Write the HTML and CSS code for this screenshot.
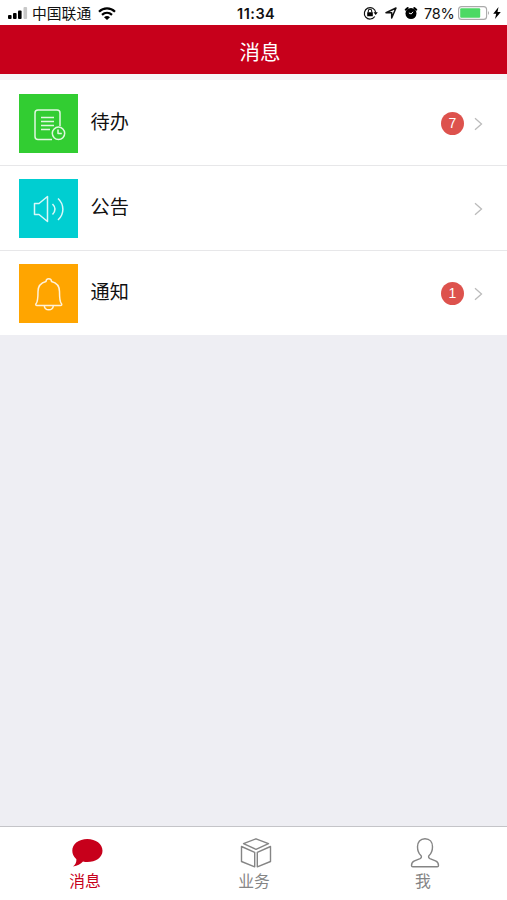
FILE: index.html
```html
<!DOCTYPE html>
<html lang="zh-CN">
<head>
<meta charset="utf-8">
<title>消息</title>
<link rel="stylesheet" href="styles.css">
</head>
<body>
<div class="status">
  <svg class="signal" width="20" height="12" viewBox="0 0 20 12"><rect x="0" y="8" width="3.6" height="4" rx="1"/><rect x="5" y="6" width="3.6" height="6" rx="1"/><rect x="10" y="3.5" width="3.6" height="8.5" rx="1"/><rect x="15.5" y="0" width="3.6" height="12" rx="1" fill="#c8c8c8"/></svg>
  <span class="carrier">中国联通</span>
  <svg class="wifi" width="18" height="13" viewBox="0 0 18 13"><g fill="none" stroke="#000" stroke-width="2.2"><path d="M1 4.7C5.5.3 12.500.3 17 4.700"/><path d="M4 7.900c2.900-2.700 7.100-2.700 10 0"/></g><path d="M6 10.200q3-2.400 6 0L9 13z"/></svg>
  <span class="time">11:34</span>
  <div class="indicators">
    <svg width="15" height="14" viewBox="0 0 15 14"><path d="M11.800 10.500A5.700 5.700 0 1 1 12.700 6.500" fill="none" stroke="#111" stroke-width="1.200"/><path d="M10.500 6.300h4.300l-2.100 2.800zM4.200 6.300h5.600v4H4.200z"/><path d="M5.300 6.500V5a1.700 1.700 0 0 1 3.400 0v1.500" fill="none" stroke="#111" stroke-width="1.100"/></svg>
    <svg class="locate" width="12" height="12" viewBox="0 0 12 12"><path d="M1 5.800 11 1 6.700 11V5.800z" fill="none" stroke="#111" stroke-width="1.500" stroke-linejoin="round"/></svg>
    <svg class="alarm" width="14" height="14" viewBox="0 0 14 14"><circle cx="7" cy="7.500" r="5.500"/><path d="M1.700 3.700 3.700 2M12.300 3.700 10.300 2" stroke="#000" stroke-width="2" stroke-linecap="round"/><path d="M7.200 8 9 5.800M7.200 8 4.900 7" fill="none" stroke="#fff" stroke-width="1"/></svg>
    <span class="percent">78%</span>
    <svg class="battery" width="32" height="14" viewBox="0 0 32 14"><rect x=".6" y=".6" width="28" height="12.800" rx="3" fill="#fff" stroke="#aaa" stroke-width="1.100"/><rect x="2.200" y="2.200" width="20" height="9.600" rx="1" fill="#4cd964"/><path d="M30 5q2 2 0 4z" fill="#aaa"/></svg>
    <svg class="bolt" width="8" height="12" viewBox="0 0 8 12"><path d="M5.500 0 .2 6.800h3L2 12l5.800-7H4.500z"/></svg>
  </div>
</div>
<header class="header">消息</header>
<main class="list">
  <div class="row">
    <div class="tile green"><svg width="59" height="59" viewBox="0 0 59 59"><path d="M41 32V19q0-3-3-3H19q-3 0-3 3v23.500q0 3 3 3h14"/><path d="M22 23.500h13M22 27.500h13M22 31.500h13M22 35.500h9"/><circle cx="39.500" cy="39.300" r="6.200"/><path d="M39 35.500v4h3.800"/></svg></div>
    <span class="label">待办</span><span class="badge">7</span>
    <svg class="chevron" width="9" height="14" viewBox="0 0 9 14"><path d="m1 1.300 6.500 5.700L1 12.700"/></svg>
  </div>
  <div class="row">
    <div class="tile cyan"><svg width="59" height="59" viewBox="0 0 59 59"><path d="M28.500 17.500v25L20 35.500h-4.500v-11H20z"/><path d="M33.500 25q5 5 0 10.500M39 19.500c6.500 6 6.500 15.500 0 21.500"/></svg></div>
    <span class="label">公告</span>
    <svg class="chevron" width="9" height="14" viewBox="0 0 9 14"><path d="m1 1.300 6.500 5.700L1 12.700"/></svg>
  </div>
  <div class="row">
    <div class="tile orange"><svg width="59" height="59" viewBox="0 0 59 59"><path d="M27 17.500c0-3.700 5.500-3.700 5.500 0 5 1.300 8 5 8 10 0 7 .5 10.500 1.800 12 .9 1 .4 2-.8 2h-23.500c-1.200 0-1.700-1-.8-2 1.300-1.500 1.800-5 1.800-12 0-5 3-8.700 8-10zM25.300 42c.5 5 8.500 5 9 0"/></svg></div>
    <span class="label">通知</span><span class="badge">1</span>
    <svg class="chevron" width="9" height="14" viewBox="0 0 9 14"><path d="m1 1.300 6.500 5.700L1 12.700"/></svg>
  </div>
</main>
<nav class="tabs">
  <div class="tab active"><svg width="32" height="30" viewBox="0 0 32 30"><path d="M16.300 1C24.800 1 31.500 6 31.500 12.800S24.800 24 16.300 24q-2.300 0-4.300-.5Q8.500 27.500 2 28.600q3.700-3.300 3.400-7.400Q1.300 17.800 1.300 12.800C1.300 6 7.800 1 16.300 1z"/></svg><span>消息</span></div>
  <div class="tab"><svg class="outline" width="32" height="30" viewBox="0 0 32 30"><path d="M16 .8 28.500 5.700 16 11.300 3.500 5.700zM1.500 8.500l13.200 5.800v14.500L1.500 23.500zM30.500 8.500l-13.200 5.800v14.500l13.200-5.300z"/></svg><span>业务</span></div>
  <div class="tab"><svg class="outline" width="32" height="30" viewBox="0 0 32 30"><path d="M16 .8c4.800 0 7.500 3.400 7.500 8 0 3.700-1.200 6.700-3.400 8.800-1 1-.5 2.400.8 3l5.600 2.300c2.200.9 3 2.600 3 4.700 0 .8-.5 1.200-1.300 1.200H3.800c-.8 0-1.300-.4-1.300-1.200 0-2.100.8-3.800 3-4.700l5.600-2.300c1.300-.6 1.800-2 .8-3-2.200-2.100-3.400-5.100-3.400-8.800 0-4.600 2.700-8 7.500-8z"/></svg><span>我</span></div>
</nav>
</body>
</html>
```
FILE: styles.css
```css
* { box-sizing: border-box; }
body {
  margin: 0;
  height: 900px;
  display: flex;
  flex-direction: column;
  overflow: hidden;
  background: #eeeef3;
  color: #111;
  font-family: "Liberation Sans", "Noto Sans CJK SC", sans-serif;
}
svg { display: block; flex: none; }
.status {
  height: 25px;
  flex: none;
  display: grid;
  grid-template-columns: 24px 66px 139px 54px 1fr;
  align-items: center;
  padding: 2px 6px 0 8px;
  background: #fff;
  line-height: 20px;
}
.signal, .wifi { margin-top: -1px; }
.carrier { font-size: 14.800px; white-space: nowrap; }
.time { font: 600 14.500px/20px Inter, sans-serif; letter-spacing: .5px; }
.indicators { display: flex; align-items: center; justify-content: flex-end; }
.indicators svg { margin-top: -1px; }
.locate { margin-left: 7px; }
.alarm { margin-left: 7px; }
.percent { margin-left: 6px; font: 14.500px/20px Inter, sans-serif; width: 30px; letter-spacing: -.2px; }
.battery { margin-left: 4px; }
.bolt { margin-left: 3px; }
.header {
  height: 49px;
  flex: none;
  background: #c7001b;
  color: #fff;
  font-size: 20.500px;
  font-weight: 400;
  line-height: 55px;
  padding-left: 13px;
  text-align: center;
}
.list { border-top: 6px solid #f6f6f8; }
.row {
  height: 85px;
  display: flex;
  align-items: center;
  padding: 1px 24px 0 19px;
  background: #fff;
  border-bottom: 1px solid #e7e7e9;
}
.row:first-child { height: 86px; padding-top: 2px; }
.row:last-child { height: 84px; border-bottom: 0; }
.tile { width: 59px; height: 59px; flex: none; }
.tile svg { fill: none; stroke: #fff; stroke-width: 1.500; stroke-opacity: .85; stroke-linejoin: round; }
.green { background: #32cd32; }
.cyan { background: #00ced1; }
.orange { background: #ffa500; }
.label { flex: 1; margin: 0 0 0 12.500px; font-size: 19.200px; line-height: 28px; transform: translateY(-1px); }
.badge {
  width: 23px;
  height: 23px;
  margin-right: 10px;
  border-radius: 50%;
  background: #dd524d;
  color: #fff;
  font-size: 14px;
  line-height: 23px;
  text-align: center;
}
.chevron { fill: none; stroke: #bbb; stroke-width: 1.300; }
.tabs {
  height: 74px;
  flex: none;
  margin-top: auto;
  display: grid;
  grid-template-columns: repeat(3, 1fr);
  background: #fff;
  border-top: 1px solid #c4c4c8;
}
.tab {
  display: flex;
  flex-direction: column;
  align-items: center;
  padding-top: 11px;
  color: #858585;
  font-size: 15.800px;
  line-height: 24px;
}
.tab svg { margin-left: 5px; }
.tab span { margin: 2px 0 0 1px; }
.tab.active { color: #c7001b; fill: #c7001b; }
.outline { fill: none; stroke: #858585; stroke-width: 1.400; stroke-linejoin: round; }
```
